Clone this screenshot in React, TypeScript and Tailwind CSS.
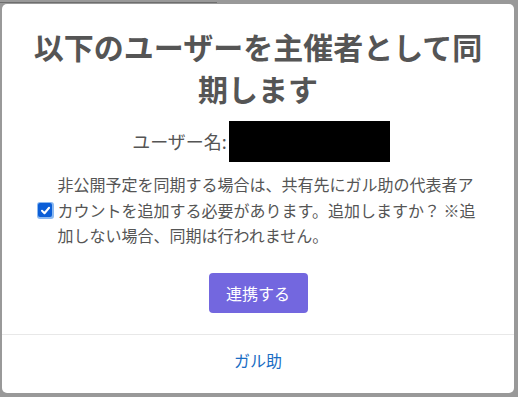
import React from "react";

export default function App() {
  const font = { fontFamily: '"Noto Sans CJK JP", "Noto Sans", sans-serif' };
  return (
    <div
      className="w-[518px] h-[397px] bg-[#999999] flex flex-col overflow-hidden"
      style={font}
    >
      <div className="h-[4px] shrink-0">
        <div className="w-[217px] h-[3px] border-b border-[#6e6e6e]" />
      </div>
      <div className="flex">
        <div className="w-[2px] shrink-0" />
        <div className="w-[512px] h-[389px] bg-white rounded-[5px] flex flex-col">
          <div className="pt-[21px] text-center text-[30px] leading-[42px] font-bold text-[#555555]">
            以下のユーザーを主催者として同
            <br />
            期します
          </div>
          <div className="mt-[12px] flex items-center justify-center text-[18px] text-[#555555]">
            <span className="leading-[41px] pl-[6px]">ユーザー名:</span>
            <span className="w-[161px] h-[41px] bg-black ml-[2px]" />
          </div>
          <div className="mt-[10px] flex items-center justify-center">
            <span className="w-[17px] h-[17px] rounded-[3px] bg-[#8cb9f0] p-[1.5px] flex shrink-0">
              <span className="flex-1 rounded-[2px] bg-[#0b5ed7] flex items-center justify-center">
                <svg width="11" height="11" viewBox="0 0 12 12">
                  <path
                    d="M2.2 6.3 L4.9 9 L9.9 3"
                    fill="none"
                    stroke="white"
                    strokeWidth="2.2"
                    strokeLinecap="round"
                    strokeLinejoin="round"
                  />
                </svg>
              </span>
            </span>
            <p className="ml-[4px] w-[422px] text-[16px] leading-[25.5px] text-[#555555]">
              非公開予定を同期する場合は、共有先にガル助の代表者アカウントを追加する必要があります。追加しますか？ ※追加しない場合、同期は行われません。
            </p>
          </div>
          <div className="mt-[24px] flex justify-center">
            <button className="w-[99px] h-[40px] rounded-[4px] bg-[#7367df] text-white text-[16px]">
              連携する
            </button>
          </div>
          <div className="mt-[21px] border-t border-[#e8e8e8]" />
          <div className="pt-[13px] text-center leading-[24px] text-[16px] text-[#1a6dc4]">
            ガル助
          </div>
        </div>
      </div>
    </div>
  );
}
